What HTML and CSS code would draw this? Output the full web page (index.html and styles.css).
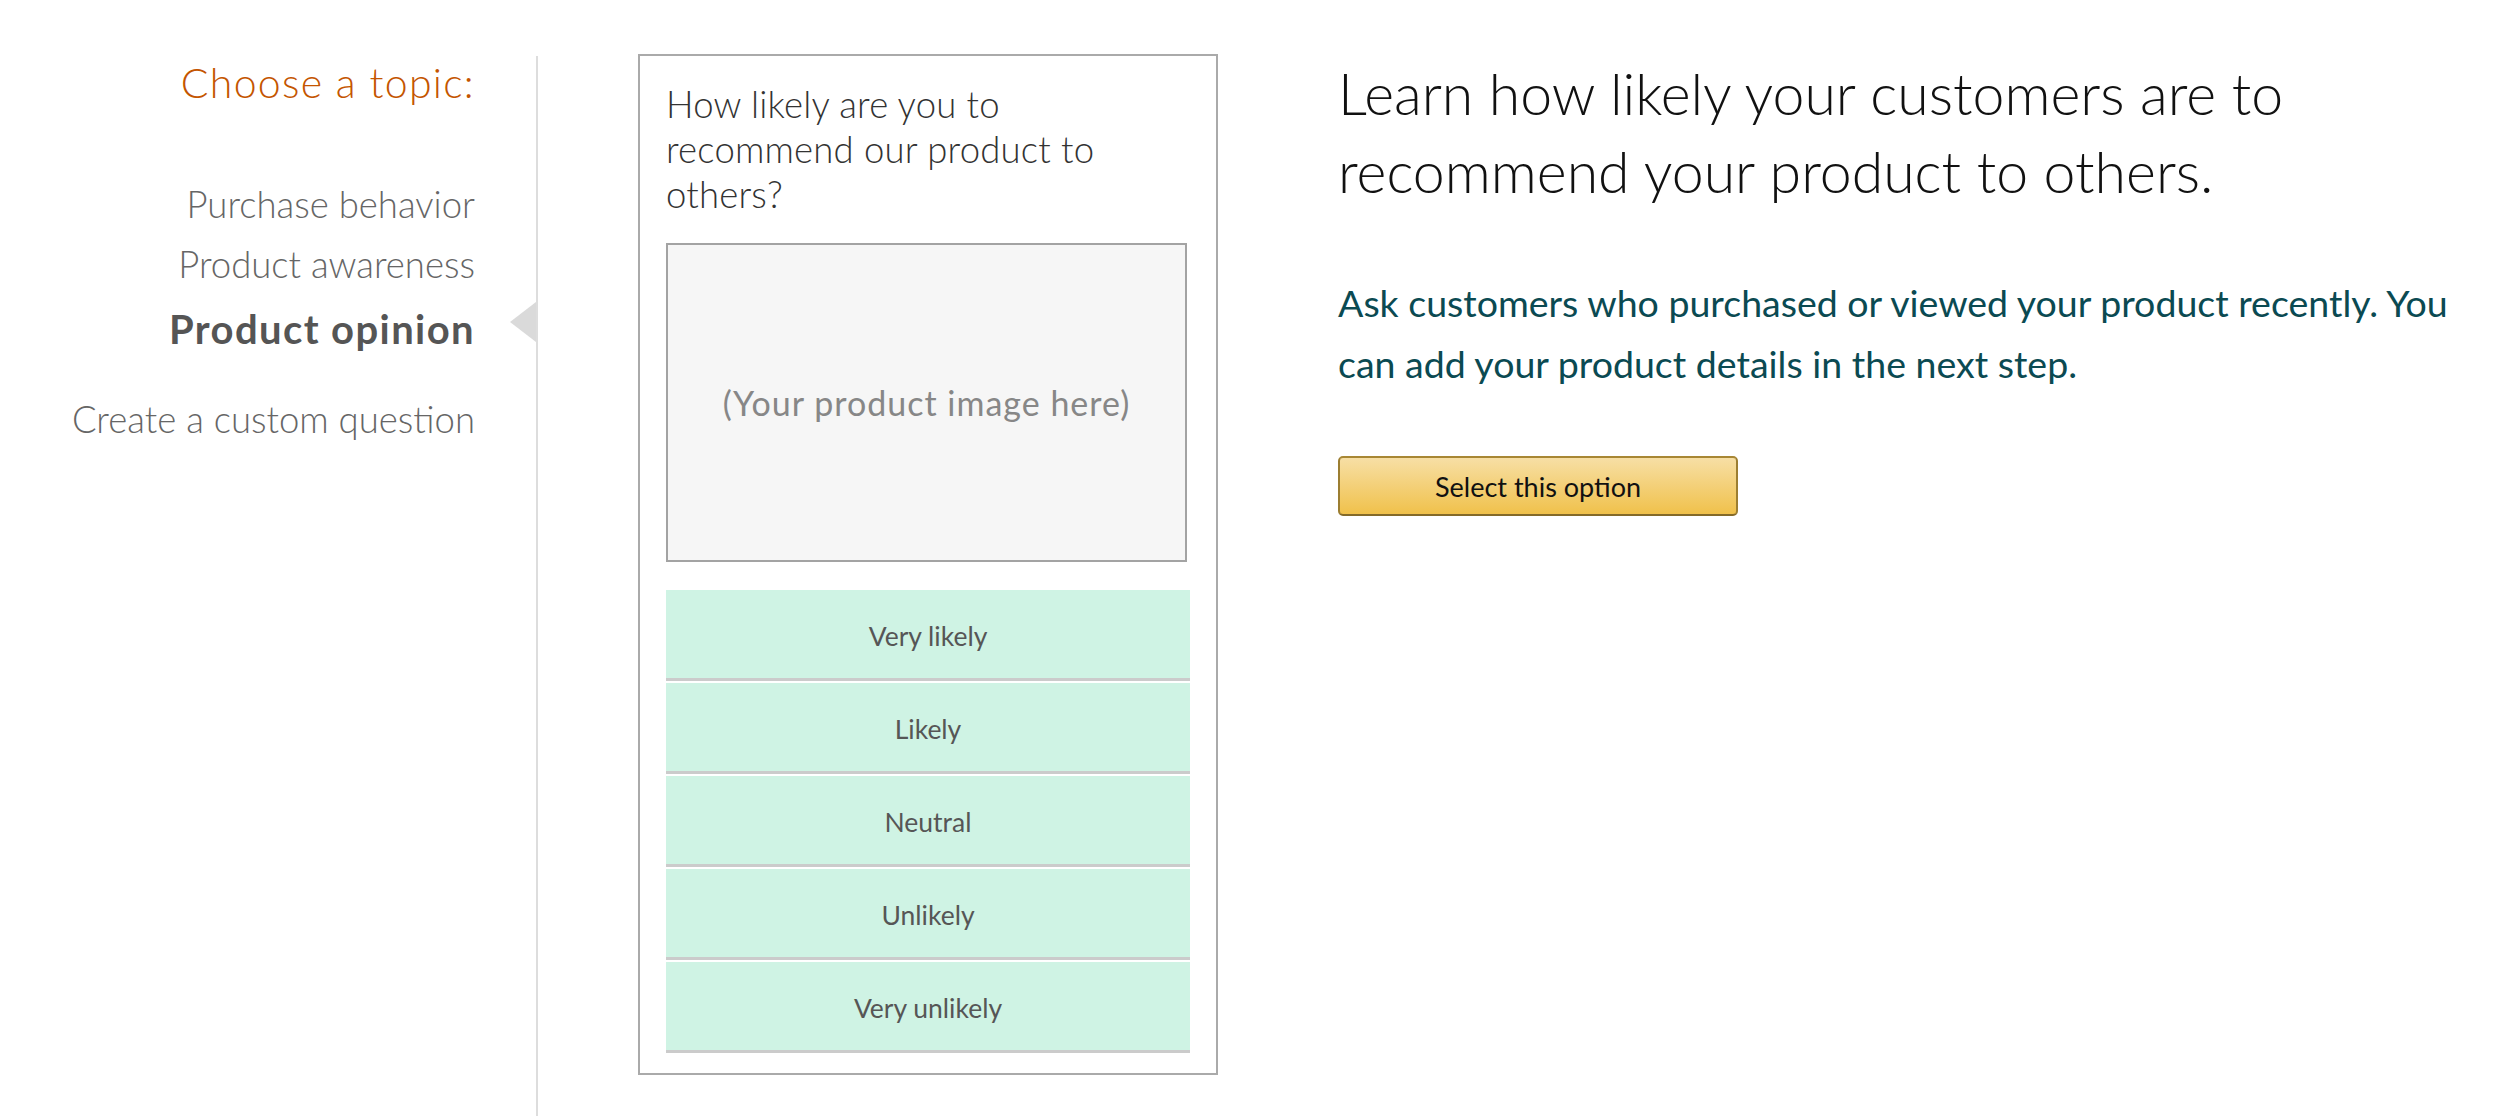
FILE: index.html
```html
<!DOCTYPE html>
<html lang="en">
<head>
<meta charset="utf-8">
<title>Choose a topic</title>
<link rel="stylesheet" href="styles.css">
</head>
<body>
<div class="page">
  <nav class="nav">
    <h2 class="nav-title">Choose a topic:</h2>
    <ul class="nav-list">
      <li class="nav-item">Purchase behavior</li>
      <li class="nav-item">Product awareness</li>
      <li class="nav-item active">Product opinion</li>
      <li class="nav-item custom">Create a custom question</li>
    </ul>
  </nav>

  <section class="card">
    <p class="question">How likely are you to recommend our product to others?</p>
    <div class="image-box">(Your product image here)</div>
    <ul class="options">
      <li class="option">Very likely</li>
      <li class="option">Likely</li>
      <li class="option">Neutral</li>
      <li class="option">Unlikely</li>
      <li class="option">Very unlikely</li>
    </ul>
  </section>

  <section class="info">
    <h1 class="info-title">Learn how likely your customers are to recommend your product to others.</h1>
    <p class="info-text">Ask customers who purchased or viewed your product recently. You can add your product details in the next step.</p>
    <button class="select-btn" type="button">Select this option</button>
  </section>
</div>
</body>
</html>
```

FILE: styles.css
```css
* { box-sizing: border-box; }

html, body {
  margin: 0;
  padding: 0;
  background: #ffffff;
}

body {
  font-family: Lato, "Noto Sans", "Liberation Sans", sans-serif;
  color: #111111;
  width: 2508px;
  height: 1116px;
  overflow: hidden;
}

.page {
  display: flex;
  align-items: flex-start;
}

/* ---------- left navigation ---------- */
.nav {
  width: 538px;
  min-height: 1060px;
  margin-top: 56px;
  padding-right: 61px;
  padding-top: 4px;
  border-right: 2px solid #dddddd;
  text-align: right;
}

.nav-title {
  margin: 0;
  font-size: 41px;
  line-height: 46px;
  letter-spacing: 1.3px;
  font-weight: 300;
  color: #c45500;
}

.nav-list {
  list-style: none;
  margin: 68px 0 0;
  padding: 0;
}

.nav-item {
  font-size: 36.5px;
  line-height: 60px;
  font-weight: 300;
  color: #666666;
}

.nav-item.active {
  position: relative;
  margin-top: 2px;
  font-size: 40px;
  line-height: 66px;
  letter-spacing: 1.4px;
  font-weight: 700;
  color: #555555;
}

.nav-item.active::after {
  content: "";
  position: absolute;
  right: -61px;
  top: 6px;
  width: 0;
  height: 0;
  border-top: 20px solid transparent;
  border-bottom: 20px solid transparent;
  border-right: 26px solid #dadada;
}

.nav-item.custom {
  margin-top: 27px;
}

/* ---------- preview card ---------- */
.card {
  width: 580px;
  margin-top: 54px;
  margin-left: 100px;
  padding: 26px 26px 20px 26px;
  border: 2px solid #aaaaaa;
}

.question {
  margin: 0;
  max-width: 500px;
  font-size: 36.5px;
  line-height: 45px;
  letter-spacing: 0.2px;
  font-weight: 300;
  color: #333333;
}

.image-box {
  width: 521px;
  height: 319px;
  margin-top: 26px;
  border: 2px solid #a3a3a3;
  background: #f6f6f6;
  display: flex;
  align-items: center;
  justify-content: center;
  font-size: 34px;
  letter-spacing: 1px;
  color: #878787;
}

.options {
  list-style: none;
  margin: 28px 0 0;
  padding: 0;
}

.option {
  height: 91px;
  margin-bottom: 2px;
  padding-top: 4px;
  background: #cff3e4;
  border-bottom: 3px solid #cbcbcb;
  display: flex;
  align-items: center;
  justify-content: center;
  font-size: 26.5px;
  color: #565656;
}

.option:last-child {
  margin-bottom: 0;
}

/* ---------- info column ---------- */
.info {
  width: 1150px;
  margin-left: 120px;
  margin-top: 54px;
}

.info-title {
  margin: 0;
  font-size: 57.2px;
  line-height: 78px;
  font-weight: 300;
  color: #111111;
}

.info-text {
  margin: 62px 0 0;
  font-size: 37.5px;
  line-height: 61px;
  font-weight: 400;
  color: #0b4a52;
}

.select-btn {
  display: block;
  width: 400px;
  height: 60px;
  margin-top: 62px;
  padding: 0;
  border: 2px solid;
  border-color: #a88734 #9c7e31 #846a29;
  border-radius: 5px;
  background: linear-gradient(to bottom, #f7dfa5, #f0c14b);
  font-family: Lato, "Noto Sans", "Liberation Sans", sans-serif;
  font-size: 27px;
  color: #111111;
  cursor: pointer;
}
```
